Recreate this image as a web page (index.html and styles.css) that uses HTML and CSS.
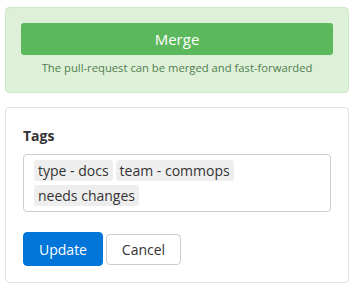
FILE: index.html
```html
<!DOCTYPE html>
<html>
<head>
<meta charset="utf-8">
<link rel="stylesheet" href="styles.css">
</head>
<body>
<div class="page">
  <div class="merge-box">
    <button class="btn-merge">Merge</button>
    <div class="merge-note">The pull-request can be merged and fast-forwarded</div>
  </div>
  <div class="tags-box">
    <div class="label">Tags</div>
    <div class="tag-input">
      <span class="chip">type - docs</span>
      <span class="chip">team - commops</span>
      <span class="chip">needs changes</span>
    </div>
    <div class="actions">
      <button class="btn btn-primary">Update</button>
      <button class="btn btn-default">Cancel</button>
    </div>
  </div>
</div>
</body>
</html>
```
FILE: styles.css
```css
* { box-sizing: border-box; }
html, body { margin: 0; padding: 0; background: #fff; }
body { font-family: "Open Sans", "DejaVu Sans", sans-serif; color: #333; }
.page { padding: 7px 5px; display: flex; flex-direction: column; gap: 14px; }
.merge-box {
  background: #dff0d8;
  border: 1px solid #d0e9c6;
  border-radius: 4px;
  padding: 15px 15px 17px;
  display: flex; flex-direction: column; align-items: stretch;
}
.btn-merge {
  height: 32px;
  background: #5cb85c;
  border: none;
  border-radius: 3px;
  color: #fff;
  font-family: inherit;
  font-size: 15px;
}
.merge-note {
  margin-top: 6px;
  text-align: center;
  font-size: 11.25px;
  line-height: 14px;
  color: #4f7f4f;
}
.tags-box {
  border: 1px solid #e3e3e3;
  border-radius: 4px;
  padding: 18px 17px 16px;
}
.label { font-weight: bold; font-size: 14px; line-height: 20px; color: #333; }
.tag-input {
  margin-top: 8px;
  border: 1px solid #ccc;
  border-radius: 4px;
  padding: 5px 10px;
  display: flex; flex-wrap: wrap; gap: 4px 3px;
}
.chip {
  background: #eee;
  border-radius: 3px;
  padding: 0 4px;
  font-size: 14px;
  line-height: 21px;
  color: #333;
}
.actions { margin-top: 20px; display: flex; gap: 3px; align-items: center; }
.btn {
  font-family: inherit;
  font-size: 14px;
  border-radius: 4px;
}
.btn-primary {
  height: 34px; width: 80px;
  background: #0275d8; color: #fff; border: 1px solid #0275d8;
}
.btn-default {
  height: 31px; width: 75px;
  background: #fff; color: #333; border: 1px solid #ccc;
}
```
